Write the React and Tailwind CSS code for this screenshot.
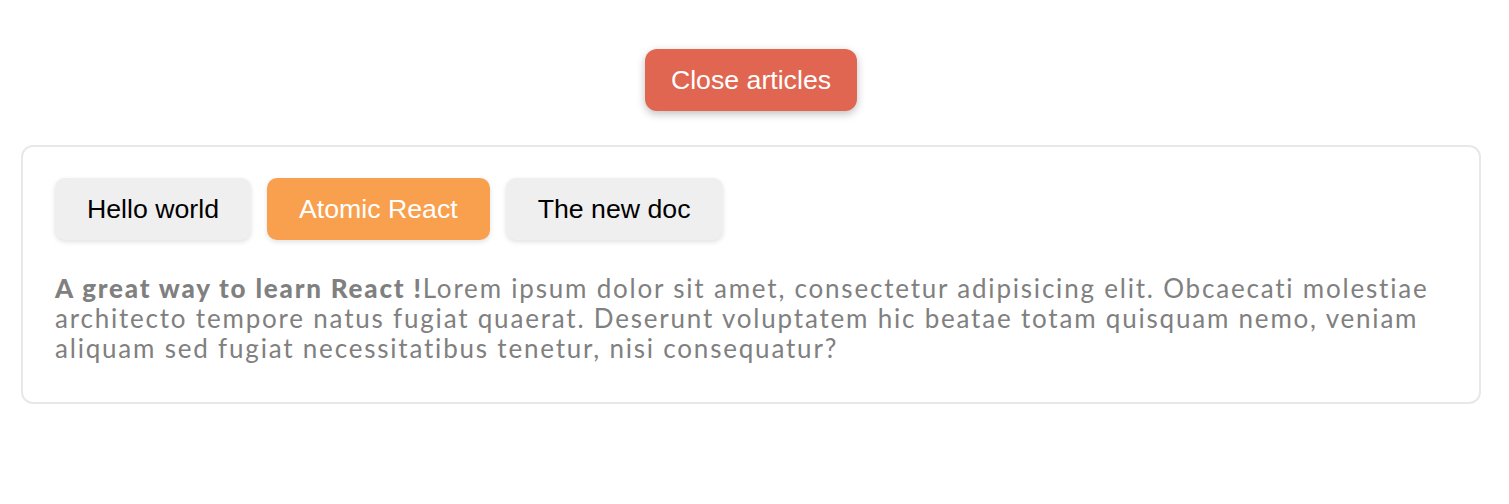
import React, { useState } from 'react';

const articles = [
  {
    title: 'Hello world',
    lead: 'Hello world !',
    body: 'Lorem ipsum dolor sit amet, consectetur adipisicing elit. Obcaecati molestiae architecto tempore natus fugiat quaerat.',
  },
  {
    title: 'Atomic React',
    lead: 'A great way to learn React !',
    body: 'Lorem ipsum dolor sit amet, consectetur adipisicing elit. Obcaecati molestiae architecto tempore natus fugiat quaerat. Deserunt voluptatem hic beatae totam quisquam nemo, veniam aliquam sed fugiat necessitatibus tenetur, nisi consequatur?',
  },
  {
    title: 'The new doc',
    lead: 'Read the new docs !',
    body: 'Lorem ipsum dolor sit amet, consectetur adipisicing elit.',
  },
];

export default function App() {
  const [open, setOpen] = useState(true);
  const [active, setActive] = useState(1);
  const current = articles[active];

  return (
    <div className="min-h-[504px] bg-white pl-[21px] pr-[28px] pt-[49px] font-['Liberation_Sans',Arial,sans-serif]">
      <div className="flex justify-center">
        <button
          onClick={() => setOpen(!open)}
          className="h-[62px] w-[212px] rounded-[12px] bg-[#e06651] text-[26.7px] text-white shadow-[0_3px_8px_rgba(0,0,0,0.25)]"
        >
          {open ? 'Close articles' : 'Open articles'}
        </button>
      </div>

      {open && (
        <div className="mt-[34px] rounded-[12px] border-2 border-[#e8e8e8] px-[32px] pb-[39px] pt-[31px]">
          <div className="flex gap-[16px]">
            {articles.map((a, i) => (
              <button
                key={a.title}
                onClick={() => setActive(i)}
                className={`h-[62px] rounded-[10px] px-[32px] text-[26.7px] shadow-[0_2px_5px_rgba(0,0,0,0.12)] ${
                  i === active ? 'bg-[#f9a04f] text-white' : 'bg-[#efefef] text-black'
                }`}
              >
                {a.title}
              </button>
            ))}
          </div>
          <p className="mt-[33px] font-['Lato',sans-serif] text-[26px] leading-[30px] tracking-[1.8px] text-[#808080]">
            <strong className="font-black">{current.lead}</strong>
            {current.body}
          </p>
        </div>
      )}
    </div>
  );
}
